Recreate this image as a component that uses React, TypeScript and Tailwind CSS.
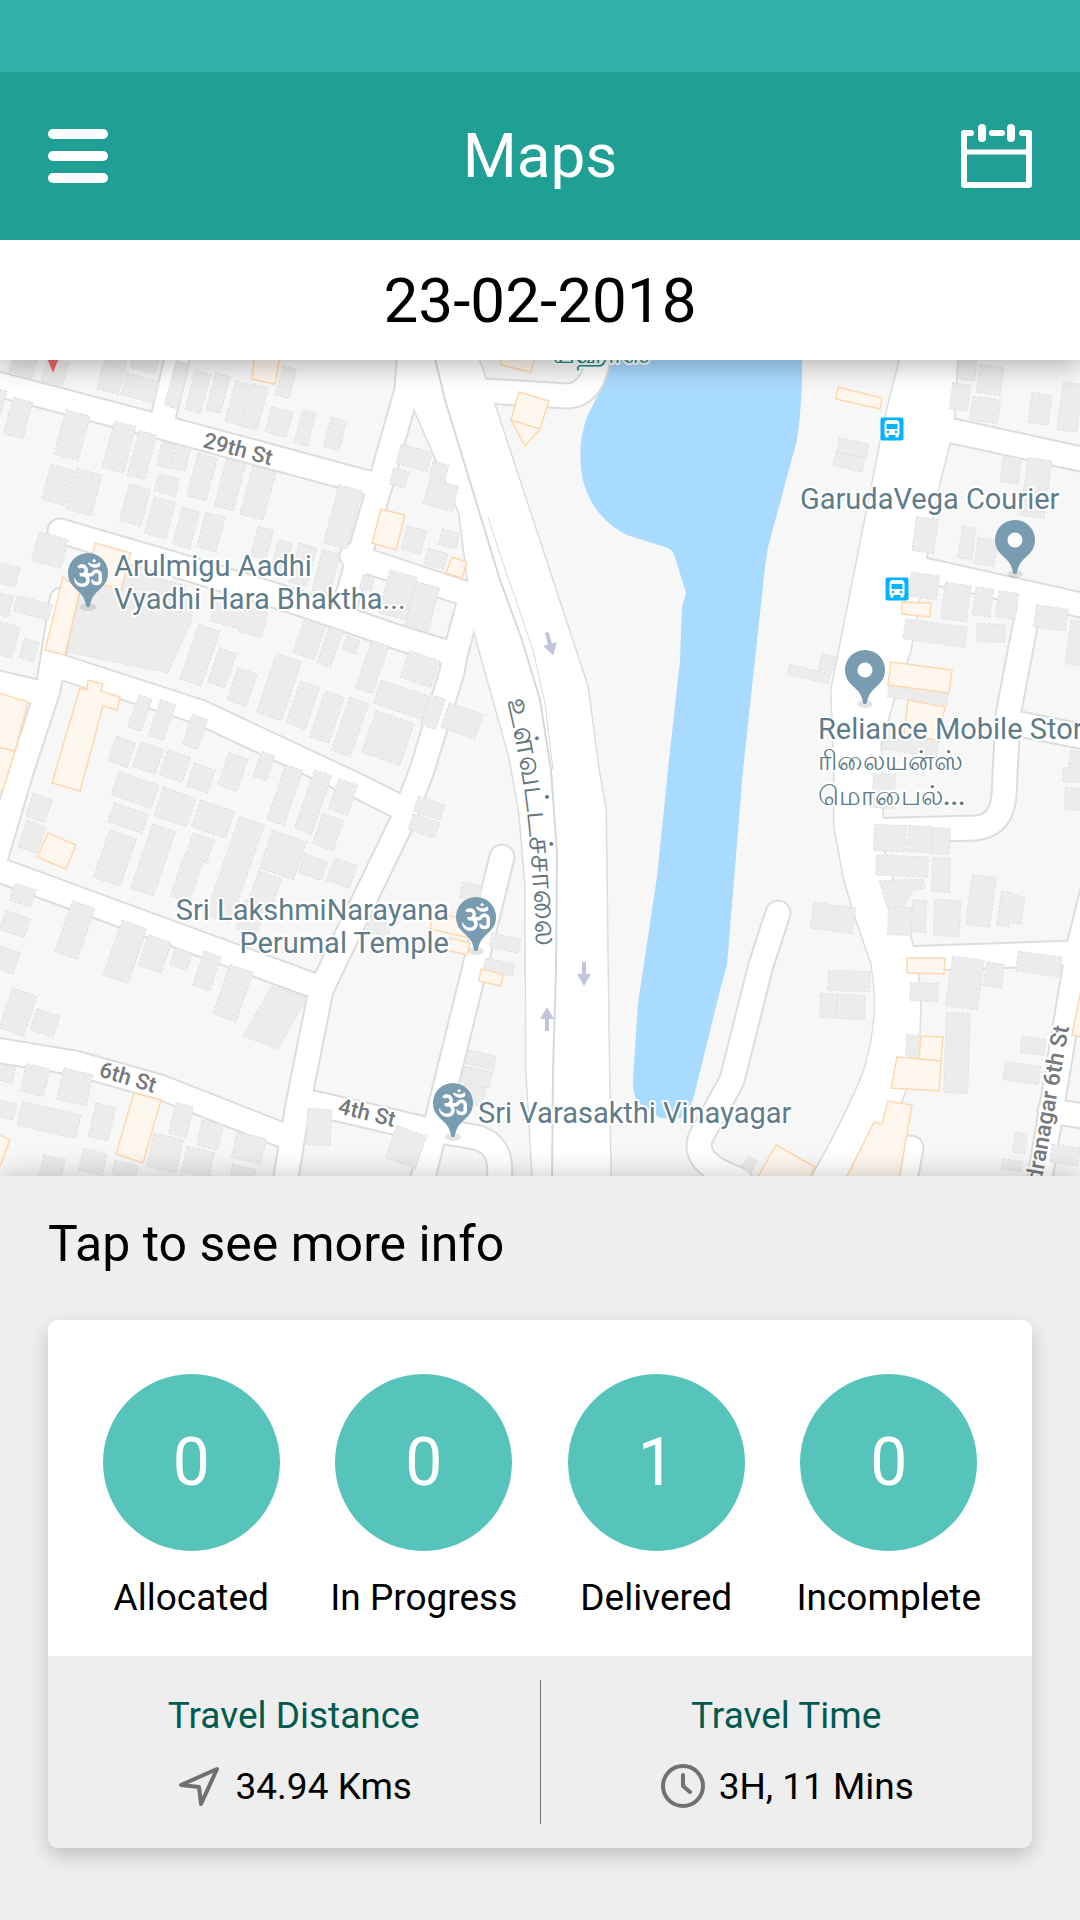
import React from 'react';
import { FaOm } from 'react-icons/fa';

// Building footprints: centre x, centre y, width, height, grouped by rotation
const buildingGroups = [
  {
    angle: 15,
    blocks: [
      [23, 365, 24, 20], [55, 372, 22, 24], [112, 375, 22, 34], [145, 362, 26, 18], [140, 388, 34, 22],
      [177, 385, 14, 46], [198, 392, 16, 40], [218, 393, 15, 38], [238, 403, 16, 42], [255, 407, 16, 44],
      [279, 422, 22, 26], [305, 428, 14, 34], [335, 434, 16, 30], [286, 382, 14, 30], [0, 402, 8, 24],
      [18, 418, 20, 38], [72, 435, 25, 46], [119, 447, 22, 48], [142, 455, 18, 46], [166, 455, 14, 24],
      [181, 458, 14, 24], [202, 477, 20, 44], [230, 485, 20, 48], [258, 493, 24, 50], [58, 485, 24, 36],
      [84, 492, 26, 42], [135, 505, 22, 38], [167, 485, 22, 18], [160, 518, 22, 38], [186, 528, 18, 38],
      [211, 532, 20, 36], [262, 543, 16, 30], [281, 558, 14, 34], [303, 565, 18, 40], [326, 572, 18, 42],
      [343, 517, 24, 60], [50, 550, 30, 30], [8, 575, 20, 20], [3, 605, 16, 22], [33, 608, 36, 16],
      [6, 640, 20, 32], [29, 650, 15, 20], [253, 622, 24, 26], [226, 615, 28, 20], [414, 458, 32, 20],
      [399, 478, 16, 16], [439, 471, 16, 16], [441, 495, 30, 26], [414, 540, 20, 24], [449, 539, 18, 16],
      [436, 559, 20, 16], [398, 595, 28, 44], [422, 607, 24, 46], [367, 583, 12, 14],
    ],
  },
  {
    angle: 19,
    blocks: [
      [200, 655, 22, 58], [222, 668, 18, 36], [242, 687, 20, 34], [279, 687, 26, 62], [303, 705, 20, 44],
      [309, 640, 22, 34], [330, 647, 14, 38], [351, 645, 14, 14], [327, 717, 20, 48], [350, 727, 20, 56],
      [140, 713, 14, 34], [162, 720, 16, 38], [195, 732, 16, 32], [122, 752, 20, 26], [148, 758, 24, 26],
      [175, 766, 24, 26], [201, 778, 22, 24], [233, 772, 20, 34], [264, 766, 14, 26], [135, 790, 42, 24],
      [128, 818, 36, 20], [115, 858, 28, 50], [153, 860, 24, 68], [175, 807, 34, 30], [213, 819, 36, 28],
      [200, 848, 22, 24], [187, 878, 20, 44], [235, 870, 26, 104], [283, 855, 36, 40], [265, 890, 24, 32],
      [251, 917, 22, 30], [285, 795, 18, 58], [313, 802, 18, 62], [343, 797, 20, 32], [328, 832, 22, 32],
      [313, 867, 24, 20], [342, 873, 24, 24], [39, 808, 20, 24], [32, 837, 20, 28], [23, 895, 22, 18],
      [15, 924, 26, 20], [7, 960, 20, 22], [18, 1012, 26, 42], [45, 1023, 24, 22], [75, 930, 24, 54],
      [125, 952, 26, 58], [155, 954, 24, 32], [181, 959, 18, 18], [207, 971, 18, 36], [233, 993, 24, 52],
      [429, 808, 28, 16], [424, 826, 28, 16], [420, 669, 32, 28], [402, 700, 52, 24], [433, 712, 16, 32],
      [462, 721, 36, 26], [388, 738, 40, 44], [372, 667, 18, 50], [406, 1147, 32, 34],
    ],
  },
  {
    angle: 13,
    blocks: [
      [4, 1073, 20, 16], [35, 1080, 24, 28], [75, 1087, 30, 32], [6, 1110, 18, 16], [49, 1120, 60, 24],
      [102, 1122, 20, 34], [181, 1120, 18, 32], [210, 1135, 22, 26], [249, 1148, 30, 26], [165, 1153, 30, 34],
      [198, 1162, 28, 26], [93, 1162, 24, 22], [125, 1170, 24, 14], [52, 1168, 22, 22], [243, 1172, 24, 10],
      [471, 892, 20, 16], [379, 928, 22, 14], [505, 943, 30, 14], [499, 967, 30, 12], [481, 1060, 28, 14],
      [477, 1077, 28, 16], [473, 1095, 22, 20], [853, 448, 30, 14], [849, 462, 30, 14], [827, 663, 14, 16],
      [809, 674, 42, 10],
    ],
  },
  {
    angle: 8,
    blocks: [
      [967, 370, 18, 20], [990, 380, 24, 28], [960, 397, 18, 26], [985, 410, 28, 24], [1040, 409, 20, 30],
      [1070, 407, 20, 48], [1011, 470, 18, 26], [1036, 488, 24, 58], [925, 535, 22, 34], [967, 543, 14, 32],
      [986, 552, 20, 26], [924, 586, 28, 24], [956, 602, 26, 36], [983, 602, 18, 28], [1007, 605, 20, 26],
      [935, 633, 62, 20], [918, 695, 60, 12], [910, 743, 56, 20], [1051, 618, 32, 22], [1077, 643, 18, 44],
      [1077, 763, 16, 24], [981, 901, 24, 50], [1005, 909, 12, 34], [1018, 910, 10, 28], [833, 918, 42, 26],
      [965, 983, 32, 50], [994, 975, 18, 24], [1039, 964, 44, 20], [1033, 1046, 24, 16], [1022, 1073, 36, 18],
      [1020, 1143, 12, 20], [1012, 1165, 20, 10], [1065, 1155, 28, 18],
    ],
  },
  {
    angle: 2,
    blocks: [
      [991, 633, 28, 18], [884, 783, 22, 18], [884, 800, 22, 16], [890, 838, 32, 26], [920, 839, 24, 26],
      [941, 841, 18, 26], [902, 866, 52, 20], [941, 875, 18, 34], [900, 921, 24, 28], [919, 916, 14, 32],
      [947, 918, 26, 36], [849, 981, 42, 20], [829, 1006, 18, 24], [851, 1007, 28, 24], [924, 992, 28, 18],
      [957, 1053, 24, 80], [913, 1047, 14, 24], [319, 1127, 24, 36], [1073, 775, 20, 14], [1073, 799, 16, 22],
    ],
  },
];

const oddBuildings = [
  '80,592 100,565 185,585 192,620 168,673 67,652',
  '272,986 307,998 278,1049 243,1036',
  '879,881 923,879 925,888 913,890 903,907 887,908',
  '742,1166 748,1156 757,1161 750,1174',
];

const shops = [
  '255,350 281,350 275,384 252,379',
  '95,543 131,553 121,590 88,580',
  '63,577 80,590 65,655 45,650',
  '-4,692 28,702 15,751 -4,747',
  '-4,747 15,751 3,790 -4,790',
  '88,680 103,684 101,691 120,697 117,710 103,706 80,791 52,783 80,688 87,690',
  '48,833 76,845 66,869 37,857',
  '134,1093 161,1100 143,1163 116,1154',
  '-4,1133 10,1140 -4,1176',
  '499,350 501,365 531,372 536,350',
  '519,392 549,401 540,429 511,420',
  '511,420 540,429 525,446',
  '381,509 405,515 396,550 372,543',
  '452,557 467,562 462,578 446,573',
  '433,912 460,918 470,938 430,929',
  '450,938 470,943 467,955 446,950',
  '481,969 503,974 501,986 479,981',
  '838,387 882,398 880,409 836,399',
  '902,602 931,603 930,617 902,614',
  '891,662 952,670 949,693 888,685',
  '908,700 945,707 937,740 904,735',
  '907,958 945,958 944,974 907,973',
  '921,1036 943,1037 941,1061 919,1059',
  '897,1057 941,1061 939,1091 891,1088',
  '888,1101 912,1105 899,1180 845,1180 874,1122 882,1124',
  '776,1145 815,1167 808,1180 756,1180',
  '1084,975 1072,1035 1084,1038',
];

const streets = [
  'M-10 382 L150 424 L350 478 L380 486',
  'M179 350 L163 418',
  'M410 350 L407 390 L380 485 L343 612',
  'M352 556 L470 595',
  'M60 531 L170 563 L290 600 L400 638 L455 655',
  'M470 600 L455 655 L452 672 L422 770 L402 822 L340 950 L321 990 L297 1110 L284 1190',
  'M-10 681 L45 694',
  'M55 665 L200 712 L360 787 L402 808',
  'M62 600 L48 690 L20 775 L-5 860',
  'M-20 863 L315 986',
  'M-10 1049 L75 1063 L160 1087 L290 1138',
  'M300 1100 L420 1128 L475 1137 Q508 1145 497 1190',
  'M502 857 L447 1080 L420 1190',
  'M470 390 L567 396 Q597 395 599 345',
  'M930 426 L1090 461',
  'M910 567 L1090 607',
  'M1030 600 L1008 715 L1004 795 Q1002 826 975 828 L860 831',
  'M1010 722 L1090 738',
  'M900 959 L1075 953',
  'M1098 870 L1078 950 L1038 1190',
  'M1050 1111 L1090 1117',
  'M778 913 L761 965 L732 1080 L702 1135 Q688 1162 740 1180',
  'M911 1148 L903 1190',
];

const avenues = [
  'M400 350 L475 350 L493 402 L587 687 L598 770 L605 810 L607 970 L610 1190 L534 1190 L527 1070 L526 883 L520 813 L510 757 L475 632 L460 513 L413 405 Z',
  'M903 350 L887 413 L832 690 L835 770 L835 827 L845 880 L857 920 L872 963 Q882 1015 865 1070 Q848 1115 805 1190 L838 1190 L900 1103 L915 1063 Q925 1003 913 948 L883 850 L880 743 L893 700 L910 650 L937 490 L953 428 L957 350 Z',
];

const stats = [
  { label: 'Allocated', count: 0 },
  { label: 'In Progress', count: 0 },
  { label: 'Delivered', count: 1 },
  { label: 'Incomplete', count: 0 },
];

function Pin({ x, y, temple = false }: { x: number; y: number; temple?: boolean }) {
  return (
    <g transform={`translate(${x} ${y})`}>
      <ellipse cx="0" cy="34" rx="8" ry="4" fill="#000" opacity="0.1" />
      <path
        d="M0 -20 A20 20 0 0 0 -20 0 C-20 10 -14 14 -8 20 C-4 24 -3 28 -1.5 34 H1.5 C3 28 4 24 8 20 C14 14 20 10 20 0 A20 20 0 0 0 0 -20Z"
        fill="#799cb0"
      />
      {temple ? (
        <FaOm x={-14} y={-14} size={28} color="#fff" />
      ) : (
        <circle cx="0" cy="0" r="7.5" fill="#fff" />
      )}
    </g>
  );
}

function BusStop({ x, y }: { x: number; y: number }) {
  return (
    <g transform={`translate(${x} ${y})`}>
      <rect x="-11.5" y="-11.5" width="23" height="23" rx="2" fill="#03b3fd" />
      <path
        d="M-7.5 -5 Q-7.5 -9 -3.5 -9 H3.5 Q7.5 -9 7.5 -5 V6 H6.5 V8.5 H3.5 V6 H-3.5 V8.5 H-6.5 V6 H-7.5Z"
        fill="#fff"
      />
      <rect x="-5.5" y="-5" width="11" height="5" fill="#03b3fd" />
      <circle cx="-4" cy="3" r="1.3" fill="#03b3fd" />
      <circle cx="4" cy="3" r="1.3" fill="#03b3fd" />
    </g>
  );
}

function Arrow({ x, y, angle }: { x: number; y: number; angle: number }) {
  return (
    <path
      transform={`translate(${x} ${y}) rotate(${angle})`}
      d="M-2 -12 H2 V0 H7 L0 12 L-7 0 H-2Z"
      fill="#c2c4dc"
    />
  );
}

function StreetMap() {
  return (
    <svg
      viewBox="0 360 1080 816"
      preserveAspectRatio="xMidYMid slice"
      className="block w-full"
      role="img"
      aria-label="Street map"
    >
      <rect x="0" y="360" width="1080" height="816" fill="#f7f7f7" />

      {/* Lake */}
      <path
        d="M612 350 L604 383 L597 397 L587 417 Q576 448 583 480 Q588 500 600 514 Q612 528 627 535 L665 547 Q672 549 674 554 L686 593 L682 607 L680 660 L668 770 L657 877 L638 1003 L633 1080 Q633 1095 638 1102 L660 1118 H682 L693 1100 L720 990 L727 965 L743 770 L765 567 L768 547 L797 440 Q803 400 802 350Z"
        fill="#a9daff"
      />

      {/* Roads: casing first, then the white surface */}
      <g fill="none" stroke="#dcdddd" strokeLinecap="round" strokeLinejoin="round">
        {streets.map((d) => (
          <path key={d} d={d} strokeWidth="27" />
        ))}
        {avenues.map((d) => (
          <path key={d} d={d} strokeWidth="4" />
        ))}
      </g>
      <g fill="none" stroke="#fff" strokeLinecap="round" strokeLinejoin="round">
        {streets.map((d) => (
          <path key={d} d={d} strokeWidth="23" />
        ))}
        {avenues.map((d) => (
          <path key={d} d={d} fill="#fff" strokeWidth="1" />
        ))}
      </g>
      <g fill="none" stroke="#d5d9dd" strokeWidth="2">
        <path d="M433 350 L445 400 L500 580 L522 640 L540 700 L551 770 L557 853 L556 970 L553 1070 L552 1180" />
        <path d="M488 517 L503 563 L533 650 L545 703 L553 770" strokeWidth="1" />
      </g>

      {/* Buildings */}
      <g fill="#ececec" stroke="#dfdfdf" strokeWidth="1" strokeDasharray="3 2">
        {oddBuildings.map((points) => (
          <polygon key={points} points={points} />
        ))}
        {buildingGroups.map((group) =>
          group.blocks.map(([x, y, w, h]) => (
            <rect
              key={`${x}-${y}`}
              x={x - w / 2}
              y={y - h / 2}
              width={w}
              height={h}
              transform={`rotate(${group.angle} ${x} ${y})`}
            />
          ))
        )}
      </g>
      <g fill="#fff6ed" stroke="#ffd9ae" strokeWidth="1.5">
        {shops.map((points) => (
          <polygon key={points} points={points} />
        ))}
      </g>

      <Arrow x={550} y={644} angle={-16} />
      <Arrow x={584} y={974} angle={0} />
      <Arrow x={547} y={1019} angle={180} />
      <BusStop x={892} y={429} />
      <BusStop x={897} y={589} />
      <path d="M44 350 L53 373 L62 350Z" fill="#f0686a" />

      <Pin x={88} y={573} temple />
      <Pin x={476} y={917} temple />
      <Pin x={453} y={1103} temple />
      <Pin x={1015} y={540} />
      <Pin x={865} y={670} />

      {/* Place names */}
      <g
        className="font-[Roboto,'Noto_Sans',sans-serif] text-[29px]"
        fill="#5f7c8a"
        stroke="#fff"
        strokeWidth="4"
        strokeLinejoin="round"
        paintOrder="stroke"
      >
        <text x="114" y="576">Arulmigu Aadhi</text>
        <text x="114" y="609">Vyadhi Hara Bhaktha...</text>
        <text x="800" y="509">GarudaVega Courier</text>
        <text x="818" y="739">Reliance Mobile Store</text>
        <text x="818" y="770" className="text-[27px] font-medium">ரிலையன்ஸ்</text>
        <text x="818" y="805" className="text-[27px] font-medium">மொபைல்...</text>
        <text x="449" y="920" textAnchor="end">Sri LakshmiNarayana</text>
        <text x="449" y="953" textAnchor="end">Perumal Temple</text>
        <text x="478" y="1123">Sri Varasakthi Vinayagar</text>
        <text x="552" y="363" className="text-[27px] font-medium" fill="#1f8a8a">யஹாஸ்</text>
      </g>

      {/* Street names */}
      <g
        className="font-[Roboto,'Noto_Sans',sans-serif] text-[22px] font-medium"
        fill="#75797d"
        stroke="#fff"
        strokeWidth="4"
        strokeLinejoin="round"
        paintOrder="stroke"
      >
        <text transform="translate(202 447) rotate(15)">29th St</text>
        <text transform="translate(98 1076) rotate(17)">6th St</text>
        <text transform="translate(337 1113) rotate(14)">4th St</text>
        <text transform="translate(1069 1027) rotate(-80)" textAnchor="end" className="text-[23px]">dranagar 6th St</text>
        <path id="ringRoad" d="M507 700 Q534 810 537 975" fill="none" stroke="none" />
        <text fill="#65767d" className="text-[32px]">
          <textPath href="#ringRoad">உள்வட்டச்சாலை</textPath>
        </text>
      </g>
    </svg>
  );
}

function CalendarIcon() {
  return (
    <svg width="72" height="66" viewBox="0 0 72 66" fill="none" stroke="#fff" strokeLinecap="round" strokeLinejoin="round">
      <path d="M11 10 H4 V62 H69 V10 H62 M32 10 H42" strokeWidth="6" />
      <path d="M4 29 H69" strokeWidth="5" />
      <path d="M22 5 V15 M51 5 V15" strokeWidth="8" />
    </svg>
  );
}

export default function App() {
  return (
    <div className="min-h-screen bg-[#efefef] font-[Roboto,sans-serif] text-black">
      <div className="h-18 bg-[#30b1aa]" />

      <header className="relative z-20 flex h-42 items-center justify-between bg-[#209f95] px-12 text-white">
        <div className="flex flex-1">
          <button type="button" aria-label="Open menu" className="flex w-15 flex-col gap-3">
            <span className="h-[10px] w-full rounded-full bg-white" />
            <span className="h-[10px] w-full rounded-full bg-white" />
            <span className="h-[10px] w-full rounded-full bg-white" />
          </button>
        </div>
        <h1 className="text-[62px] leading-[72px]">Maps</h1>
        <div className="flex flex-1 justify-end">
          <button type="button" aria-label="Pick a date">
            <CalendarIcon />
          </button>
        </div>
      </header>

      <div className="relative z-10 flex h-30 items-center justify-center bg-white text-[62px] shadow-[0_6px_24px_rgba(0,0,0,0.28)]">
        23-02-2018
      </div>

      <StreetMap />

      <section className="relative bg-[#efefef] px-12 pt-8 pb-18 shadow-[0_-2px_24px_rgba(0,0,0,0.2)]">
        <h2 className="text-[50px] leading-[72px]">Tap to see more info</h2>

        <div className="mt-10 overflow-hidden rounded-[10px] bg-white shadow-[0_8px_20px_rgba(0,0,0,0.2)]">
          <div className="grid h-84 grid-cols-4 px-[27px] pt-[54px]">
            {stats.map((stat) => (
              <div key={stat.label} className="flex flex-col items-center">
                <div className="flex size-[177px] items-center justify-center rounded-full bg-[#57c4bc] text-[66px] text-white">
                  {stat.count}
                </div>
                <div className="mt-6 text-[37px] leading-[46px] whitespace-nowrap">{stat.label}</div>
              </div>
            ))}
          </div>

          <div className="flex bg-[#eeeeee] py-6 text-[37px] leading-[46px]">
            <div className="flex h-36 flex-1 flex-col items-center justify-center gap-6">
              <div className="text-[#005a50]">Travel Distance</div>
              <div className="flex items-center gap-3">
                <svg width="48" height="48" viewBox="0 0 48 48" fill="none" stroke="#707070" strokeWidth="4" strokeLinejoin="round">
                  <path d="M41 6 L5 22 L23 24 L25 41Z" />
                </svg>
                34.94 Kms
              </div>
            </div>
            <div className="w-px bg-[#707070]" />
            <div className="flex h-36 flex-1 flex-col items-center justify-center gap-6">
              <div className="text-[#005a50]">Travel Time</div>
              <div className="flex items-center gap-3">
                <svg width="48" height="48" viewBox="0 0 48 48" fill="none" stroke="#707070" strokeWidth="4" strokeLinecap="round" strokeLinejoin="round">
                  <circle cx="24" cy="23" r="20" />
                  <path d="M24 12 V23 L31 29" />
                </svg>
                3H, 11 Mins
              </div>
            </div>
          </div>
        </div>
      </section>
    </div>
  );
}
